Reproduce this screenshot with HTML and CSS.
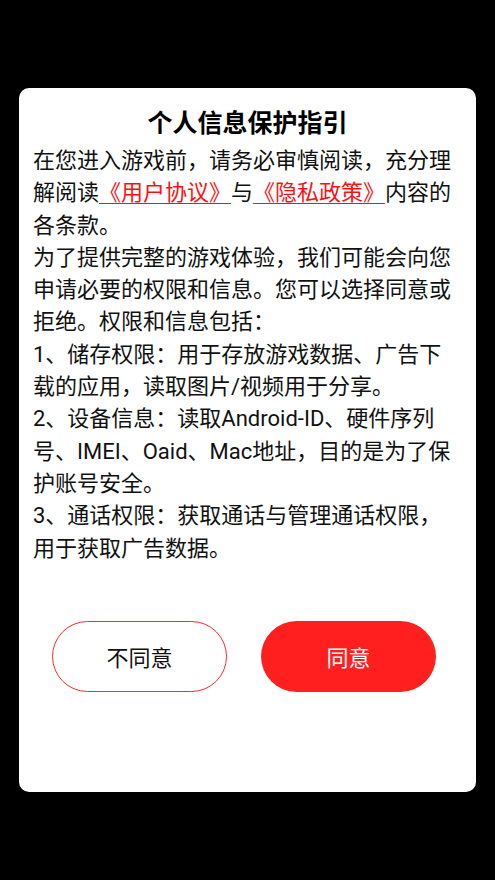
FILE: index.html
```html
<!DOCTYPE html>
<html lang="zh-CN">
<head>
<meta charset="utf-8">
<title>个人信息保护指引</title>
<link rel="stylesheet" href="styles.css">
</head>
<body>
<div class="card">
  <div class="title">个人信息保护指引</div>
  <div class="content">
    <p>在您进入游戏前，请务必审慎阅读，充分理解阅读<span class="link">《用户协议》</span>与<span class="link">《隐私政策》</span>内容的各条款。</p>
    <p>为了提供完整的游戏体验，我们可能会向您申请必要的权限和信息。您可以选择同意或拒绝。权限和信息包括：</p>
    <p>1、储存权限：用于存放游戏数据、广告下载的应用，读取图片/视频用于分享。</p>
    <p>2、设备信息：读取Android-ID、硬件序列号、IMEI、Oaid、Mac地址，目的是为了保护账号安全。</p>
    <p>3、通话权限：获取通话与管理通话权限，用于获取广告数据。</p>
  </div>
  <div class="buttons">
    <div class="btn btn-no">不同意</div>
    <div class="btn btn-yes">同意</div>
  </div>
</div>
</body>
</html>
```

FILE: styles.css
```css
html, body {
  margin: 0;
  padding: 0;
  background: #000;
  height: 880px;
  overflow: hidden;
}
body {
  font-family: Roboto, "Noto Sans CJK SC", sans-serif;
  color: #111;
}
.card {
  margin: 88px 0 0 19px;
  width: 457px;
  height: 704px;
  box-sizing: border-box;
  background: #fff;
  border-radius: 10px;
  padding: 18px 14px 0 14px;
  display: flex;
  flex-direction: column;
}
.title {
  text-align: center;
  font-size: 25px;
  font-weight: bold;
  line-height: 36px;
  color: #000;
  margin-bottom: 3px;
}
.content {
  font-size: 22px;
  line-height: 32.3px;
}
.content p {
  margin: 0;
}
.link {
  color: #ff1010;
  text-decoration: underline;
  text-decoration-thickness: 1px;
  text-underline-offset: 3px;
}
.buttons {
  display: flex;
  gap: 34px;
  padding-left: 19px;
  margin-top: 56px;
}
.btn {
  width: 175px;
  height: 71px;
  box-sizing: border-box;
  border-radius: 36px;
  display: flex;
  align-items: center;
  justify-content: center;
  font-size: 22px;
}
.btn-no {
  border: 1px solid #ff2a2a;
  color: #111;
  background: #fff;
}
.btn-yes {
  background: #ff1f1f;
  color: #fff;
}
```
